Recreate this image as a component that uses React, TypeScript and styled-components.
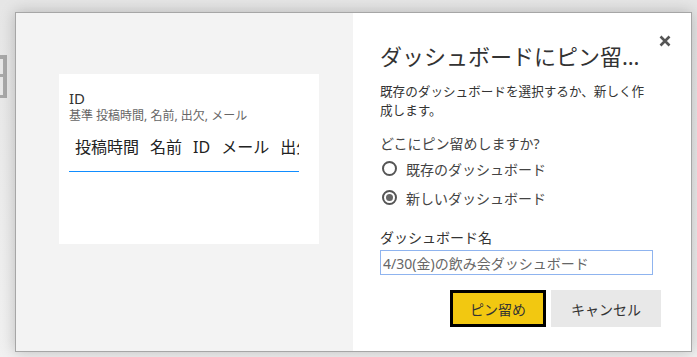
import React from 'react';
import styled, { createGlobalStyle } from 'styled-components';

const GlobalStyle = createGlobalStyle`
  html, body {
    margin: 0;
    padding: 0;
    background: #efefef;
  }
  body {
    font-family: "Noto Sans", "Noto Sans CJK JP", sans-serif;
    color: #333;
  }
`;

const Backdrop = styled.div`
  position: relative;
  width: 697px;
  height: 357px;
  overflow: hidden;
  background: linear-gradient(to bottom, #e6e6e6, #f1f1f1);
  padding: 12px 5px 0 15px;
  box-sizing: border-box;
`;

const BehindGlyph = styled.svg`
  position: absolute;
  left: 0;
  top: 55px;
`;

const Dialog = styled.div`
  position: relative;
  z-index: 1;
  display: flex;
  width: 677px;
  height: 340px;
  box-sizing: border-box;
  border: 1px solid #a6a6a6;
  box-shadow: 0 0 14px rgba(0, 0, 0, 0.22);
  background: #fff;
`;

const PreviewPane = styled.div`
  flex: 0 0 337px;
  background: #f3f3f3;
  padding: 61px 0 0 43px;
  box-sizing: border-box;
`;

const Card = styled.div`
  width: 260px;
  height: 170px;
  background: #fff;
  padding: 15px 20px 0 10px;
  box-sizing: border-box;
`;

const CardTitle = styled.div`
  font-size: 15px;
  line-height: 19px;
  color: #333;
`;

const CardSub = styled.div`
  font-size: 12px;
  line-height: 16px;
  color: #666;
`;

const HeaderRow = styled.div`
  display: flex;
  gap: 11px;
  margin-top: 5px;
  padding: 6px 0 12px 6px;
  border-bottom: 1px solid #118dff;
  white-space: nowrap;
  overflow: hidden;
  font-size: 16px;
  line-height: 24px;
  color: #222;

  span {
    flex-shrink: 0;
  }
`;

const FormPane = styled.div`
  position: relative;
  flex: 1;
  min-width: 0;
  padding: 28px 30px 0 27px;
  display: flex;
  flex-direction: column;
`;

const CloseButton = styled.button`
  position: absolute;
  top: 21px;
  right: 19px;
  border: none;
  background: none;
  padding: 0;
  width: 14px;
  height: 14px;
  display: flex;
  align-items: center;
  justify-content: center;
  cursor: pointer;
`;

const Title = styled.h2`
  margin: 0;
  font-weight: 400;
  font-size: 22px;
  line-height: 30px;
  color: #333;
  white-space: nowrap;
  overflow: hidden;
  text-overflow: ellipsis;
`;

const Description = styled.p`
  margin: 11px 0 0;
  width: 268px;
  font-size: 12.6px;
  line-height: 19px;
  color: #333;
`;

const Question = styled.div`
  margin-top: 14px;
  font-size: 14px;
  line-height: 20px;
  color: #444;
`;

const RadioRow = styled.label`
  display: flex;
  align-items: center;
  gap: 9px;
  height: 29px;
  font-size: 14px;
  color: #444;
  padding-left: 2px;
`;

const RadioMark = styled.span<{ $checked?: boolean }>`
  width: 15px;
  height: 15px;
  box-sizing: border-box;
  border: 2px solid #555;
  border-radius: 50%;
  display: flex;
  align-items: center;
  justify-content: center;
  &::after {
    content: '';
    width: 7px;
    height: 7px;
    border-radius: 50%;
    background: ${(p) => (p.$checked ? '#666' : 'transparent')};
  }
`;

const FieldLabel = styled.div`
  margin-top: 16px;
  font-size: 14px;
  line-height: 20px;
  color: #333;
`;

const NameInput = styled.input`
  margin-top: 2px;
  width: 273px;
  height: 25px;
  box-sizing: border-box;
  border: 1px solid #8fb4ef;
  outline: none;
  padding: 0 2px;
  font-family: inherit;
  font-size: 14px;
  color: #666;
`;

const Actions = styled.div`
  margin-top: 15px;
  display: flex;
  justify-content: flex-end;
  gap: 5px;
`;

const Button = styled.button<{ $primary?: boolean }>`
  height: 37px;
  width: ${(p) => (p.$primary ? '96px' : '110px')};
  box-sizing: border-box;
  border: ${(p) => (p.$primary ? '3px solid #000' : 'none')};
  background: ${(p) => (p.$primary ? '#f2c811' : '#e8e8e8')};
  font-family: inherit;
  font-size: 14px;
  color: #333;
  cursor: pointer;
`;

const columns = ['投稿時間', '名前', 'ID', 'メール', '出欠'];

export default function App() {
  return (
    <>
      <GlobalStyle />
      <Backdrop>
        <BehindGlyph width="7" height="43" viewBox="0 0 7 43">
          <g fill="#a9a9a9">
            <rect x="3" y="0" width="4" height="43" />
            <rect x="0" y="0" width="7" height="4" />
            <rect x="0" y="19" width="7" height="3" />
            <rect x="0" y="40" width="7" height="3" />
          </g>
        </BehindGlyph>
        <Dialog>
          <PreviewPane>
            <Card>
              <CardTitle>ID</CardTitle>
              <CardSub>基準 投稿時間, 名前, 出欠, メール</CardSub>
              <HeaderRow>
                {columns.map((c) => (
                  <span key={c}>{c}</span>
                ))}
              </HeaderRow>
            </Card>
          </PreviewPane>
          <FormPane>
            <CloseButton aria-label="閉じる">
              <svg width="12" height="12" viewBox="0 0 12 12">
                <path d="M1.5 1.5 L10.5 10.5 M10.5 1.5 L1.5 10.5" stroke="#555" strokeWidth="2.6" />
              </svg>
            </CloseButton>
            <Title>ダッシュボードにピン留めする</Title>
            <Description>既存のダッシュボードを選択するか、新しく作成します。</Description>
            <Question>どこにピン留めしますか?</Question>
            <RadioRow>
              <RadioMark />
              既存のダッシュボード
            </RadioRow>
            <RadioRow>
              <RadioMark $checked />
              新しいダッシュボード
            </RadioRow>
            <FieldLabel>ダッシュボード名</FieldLabel>
            <NameInput defaultValue="4/30(金)の飲み会ダッシュボード" />
            <Actions>
              <Button $primary>ピン留め</Button>
              <Button>キャンセル</Button>
            </Actions>
          </FormPane>
        </Dialog>
      </Backdrop>
    </>
  );
}
